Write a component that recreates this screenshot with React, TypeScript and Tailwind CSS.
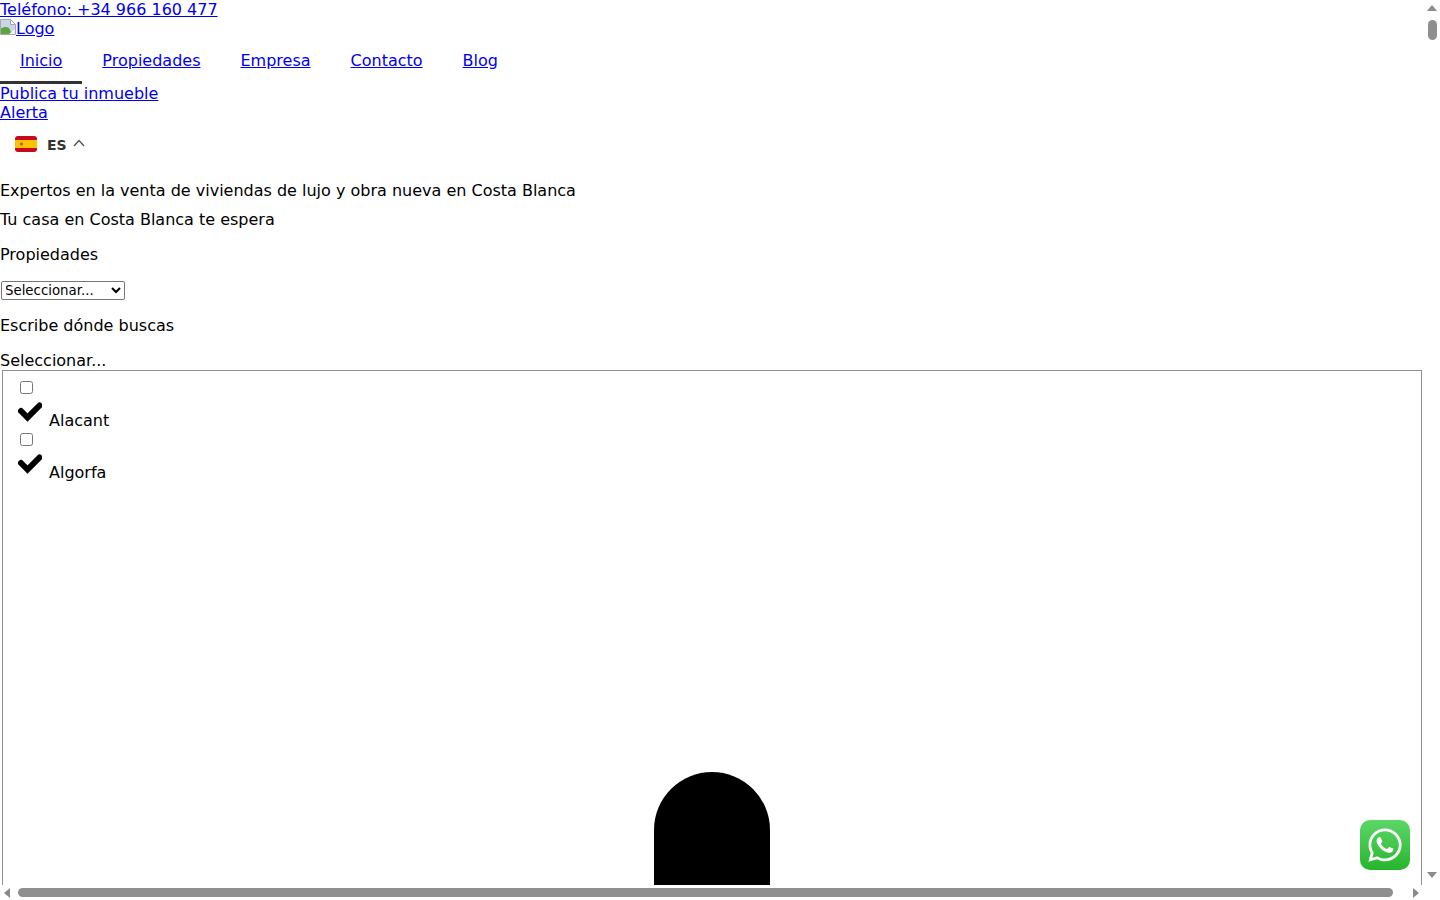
import { FaWhatsapp } from 'react-icons/fa';

const navLinks = ['Propiedades', 'Empresa', 'Contacto', 'Blog'];
const towns = ['Alacant', 'Algorfa'];

function SpainFlag() {
    return (
        <svg width="22" height="16" viewBox="0 0 22 16" className="block">
            <rect width="22" height="16" rx="3" fill="#c60b1e" />
            <rect y="4" width="22" height="8" fill="#ffc400" />
            <rect x="5" y="6.5" width="3" height="3" rx="1" fill="#ad6519" />
        </svg>
    );
}

function Chevron() {
    return (
        <svg width="12" height="8" viewBox="0 0 12 8" fill="none" stroke="#555" strokeWidth="1.4">
            <path d="M1 7l5-5.5L11 7" />
        </svg>
    );
}

function BrokenImage() {
    return (
        <svg width="16" height="16" viewBox="0 0 16 16" className="inline-block align-[-1px]">
            <path d="M.5.5h10l5 5v10H.5z" fill="#c9d6e8" stroke="#a8a8a8" />
            <path d="M10.5.5v5h5z" fill="#fff" stroke="#a8a8a8" />
            <path d="M1 15V9.5c3-2 6-2 8-.5l3 6z" fill="#5da33f" />
            <path d="M9 15l6-5v5z" fill="#f2f2f2" />
        </svg>
    );
}

function CheckMark() {
    return (
        <svg width="24" height="22" viewBox="0 0 24 22" fill="none" stroke="black" strokeWidth="6" strokeLinecap="round" className="mt-[2px] ml-[-1px] shrink-0 self-start">
            <path d="M3 9l6.5 6.5L21.5 3.5" />
        </svg>
    );
}

function Arrow({ d }: { d: string }) {
    return (
        <svg width="10" height="10" viewBox="0 0 10 10" fill="#8a8a8a" className="block">
            <path d={d} />
        </svg>
    );
}

// the reference window shows its scrollbars, the headless browser does not draw them
function Scrollbars() {
    return (
        <>
            <div className="fixed top-0 right-0 bottom-[15px] flex w-4 flex-col items-center bg-white">
                <div className="mt-[3px] ml-[-1px]">
                    <Arrow d="M5 2l5 6H0z" />
                </div>
                <div className="mt-[7px] ml-[1px] h-5 w-[9px] rounded-full bg-[#8f8f8f]" />
                <div className="mt-auto mb-[5px] ml-[-1px]">
                    <Arrow d="M5 8L0 2h10z" />
                </div>
            </div>
            <div className="fixed right-0 bottom-0 left-0 flex h-[15px] items-center bg-white pr-[19px] pl-[2px]">
                <Arrow d="M2 5l6-5v10z" />
                <div className="ml-[6px] h-[9px] w-[1375px] rounded-full bg-[#8f8f8f]" />
                <div className="ml-auto">
                    <Arrow d="M8 5L2 10V0z" />
                </div>
            </div>
        </>
    );
}

export default function App() {
    return (
        <div className="h-screen w-[1424px] overflow-hidden bg-white font-['DejaVu_Sans',sans-serif] text-base leading-[19px] text-black">
            <a href="#" className="block w-fit text-[#0000ee] underline">
                Teléfono: +34 966 160 477
            </a>
            <a href="#" className="block w-fit text-[#0000ee] underline">
                <BrokenImage />
                Logo
            </a>
            <nav className="flex h-[46px]">
                <a href="#" className="border-b-[3px] border-[#333] px-5 pt-[13px] text-[#0000ee] underline">
                    Inicio
                </a>
                {navLinks.map((link) => (
                    <a key={link} href="#" className="px-5 pt-[13px] text-[#0000ee] underline">
                        {link}
                    </a>
                ))}
            </nav>
            <a href="#" className="block w-fit text-[#0000ee] underline">
                Publica tu inmueble
            </a>
            <a href="#" className="block w-fit text-[#0000ee] underline">
                Alerta
            </a>
            <div className="flex h-[44px] items-center pl-[15px]">
                <SpainFlag />
                <span className="mt-[1px] ml-[10px] text-sm font-bold text-[#333]">ES</span>
                <span className="mt-[-2px] ml-[6px]">
                    <Chevron />
                </span>
            </div>
            <p className="mt-[15px]">Expertos en la venta de viviendas de lujo y obra nueva en Costa Blanca</p>
            <p className="mt-[10px]">Tu casa en Costa Blanca te espera</p>
            <p className="mt-4">Propiedades</p>
            <select className="mt-[17px] ml-[1px] block h-[19px] w-[124px] -indent-[1px] rounded-[2px] border border-[#767676] bg-white text-[13.33px] leading-normal">
                <option>Seleccionar...</option>
            </select>
            <p className="mt-4">Escribe dónde buscas</p>
            <p className="mt-4">Seleccionar...</p>
            <div className="mx-[2px] border border-[#8f8f8f] px-[16px] pt-[10px]">
                {towns.map((town) => (
                    <div key={town} className="h-[52px]">
                        <input type="checkbox" className="ml-[1px] block h-[13px] w-[13px]" />
                        <div className="mt-[6px] flex h-[22px] items-end">
                            <CheckMark />
                            <span className="mb-[-8px] ml-[7px]">{town}</span>
                        </div>
                    </div>
                ))}
                <div className="mx-auto mt-[287px] h-[200px] w-[116px] rounded-t-[58px] bg-black" />
            </div>
            <Scrollbars />
            <a
                href="#"
                className="fixed right-[30px] bottom-[30px] flex h-[50px] w-[50px] items-center justify-center rounded-[10px] bg-gradient-to-b from-[#5ad766] to-[#25b52b]">
                <FaWhatsapp className="h-[38px] w-[38px] text-white" />
            </a>
        </div>
    );
}
